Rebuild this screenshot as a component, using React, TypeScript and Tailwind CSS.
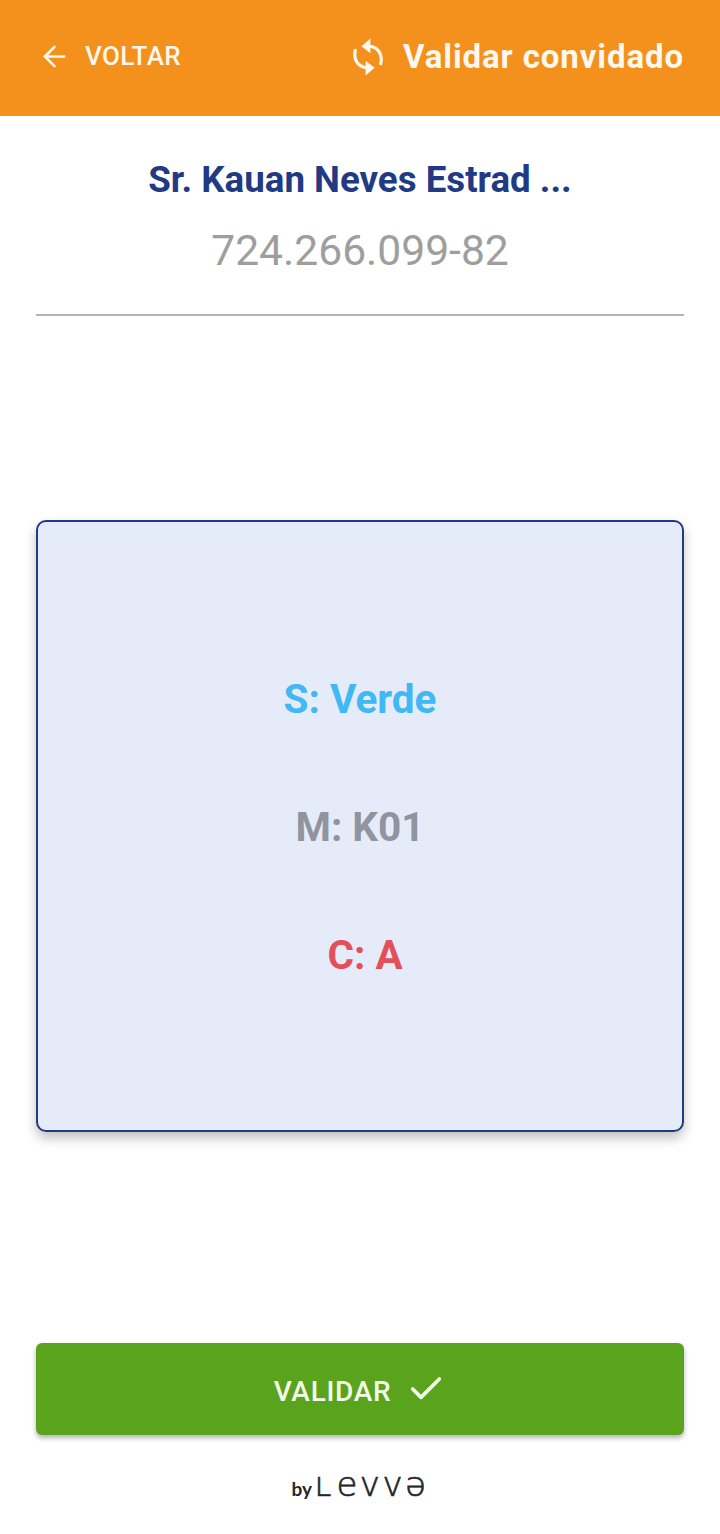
import React from 'react';
import { ArrowLeft, Check } from 'lucide-react';

const RefreshIcon = () => (
  <svg width="34" height="46" viewBox="0 0 36 46" fill="none" className="shrink-0">
    <path d="M31.5 30 C33.5 21 29.5 12.5 19 11.5" stroke="#fff8ee" strokeWidth="3.4" strokeLinecap="round" />
    <path d="M20.5 3.5 L11 11.5 L20.5 19 Z" fill="#fff8ee" />
    <path d="M4.5 16 C2.5 25 6.5 33.5 17 34.5" stroke="#fff8ee" strokeWidth="3.4" strokeLinecap="round" />
    <path d="M15.5 27 L25 34.5 L15.5 42.5 Z" fill="#fff8ee" />
  </svg>
);

const App: React.FC = () => {
  return (
    <div className="h-[1534px] w-[720px] bg-white flex flex-col font-['Roboto',sans-serif] overflow-hidden">
      <header className="h-[116px] shrink-0 bg-[#f4901c] pl-[38px] pr-[36px] pb-[3px] flex items-center justify-between text-[#fff8ee]">
        <button className="flex items-center gap-[14px]">
          <ArrowLeft size={33} strokeWidth={1.9} />
          <span className="text-[26px] font-medium tracking-[0.4px]">VOLTAR</span>
        </button>
        <div className="flex items-center gap-[18px]">
          <RefreshIcon />
          <span className="text-[33px] font-bold tracking-[0.9px]">Validar convidado</span>
        </div>
      </header>

      <div className="px-[36px] flex flex-col flex-1">
        <div className="h-[200px] shrink-0 border-b-2 border-[#b4b4b4] flex flex-col items-center">
          <h1 className="mt-[41px] text-[36.7px] leading-[46px] font-bold text-[#213a84]">Sr. Kauan Neves Estrad ...</h1>
          <p className="mt-[23px] text-[42.6px] leading-[48px] text-[#9e9e9e]">724.266.099-82</p>
        </div>

        <div className="mt-[204px] h-[612px] shrink-0 rounded-[10px] border-2 border-[#213a84] bg-[#e6ebf9] shadow-[0_6px_12px_rgba(0,0,0,0.25)] flex flex-col items-center pt-[152px] text-[40.5px] leading-[50px] font-bold">
          <p className="text-[#40b8f5]">S: Verde</p>
          <p className="mt-[78px] text-[#90949f]">M: K01</p>
          <p className="mt-[78px] ml-[10px] text-[#e4505a]">C: A</p>
        </div>

        <button className="mt-[211px] h-[92px] shrink-0 rounded-[6px] bg-[#5aa31c] shadow-[0_3px_5px_rgba(0,0,0,0.3)] flex items-center justify-center gap-[15px] text-[#f4faea]">
          <span className="mt-[6px] text-[28px] font-medium tracking-[0.7px]">VALIDAR</span>
          <Check size={40} strokeWidth={2.2} />
        </button>

        <div className="mt-[29px] flex items-baseline justify-center text-[#26262a]">
          <span className="text-[19px] font-bold font-['Lato',sans-serif]">by</span>
          <span className="ml-[2px] text-[34px] leading-[40px] tracking-[2.5px] font-extralight [-webkit-text-stroke:0.7px_#26262a] font-['DejaVu_Sans',sans-serif]">ʟevvə</span>
        </div>
      </div>
    </div>
  );
};

export default App;
